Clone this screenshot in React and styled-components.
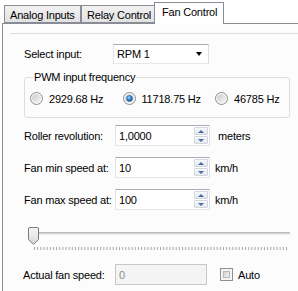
import React from "react";
import styled, { createGlobalStyle } from "styled-components";

const GlobalStyle = createGlobalStyle`
  html, body {
    margin: 0;
    padding: 0;
    background: #fff;
  }
  body {
    font-family: "Liberation Sans", Arial, sans-serif;
    font-size: 11px;
    letter-spacing: -0.2px;
    color: #000;
  }
`;

const Window = styled.div`
  width: 298px;
  height: 291px;
  overflow: hidden;
  background: #fff;
`;

const TabStrip = styled.div`
  display: flex;
  align-items: flex-end;
  height: 23px;
  padding-left: 4px;
  box-sizing: border-box;
`;

const Tab = styled.div`
  position: relative;
  box-sizing: border-box;
  width: ${p => p.$w}px;
  height: ${p => (p.$active ? 22 : 18)}px;
  margin-left: ${p => (p.$active ? -1 : 0)}px;
  margin-bottom: ${p => (p.$active ? -1 : 0)}px;
  padding: ${p => (p.$active ? "3px 0 0 7px" : "3px 0 0 5px")};
  border: 1px solid #898c95;
  border-bottom: ${p => (p.$active ? "none" : "1px solid #898c95")};
  background: ${p => (p.$active ? "#fff" : "linear-gradient(#f2f2f2, #e1e1e1)")};
  z-index: ${p => (p.$active ? 2 : 1)};
  line-height: 13px;
  white-space: nowrap;
`;

const Page = styled.div`
  margin-left: 2px;
  height: 268px;
  border-top: 1px solid #898c95;
  border-left: 1px solid #898c95;
  background: #fcfcfc;
`;

const Separator = styled.div`
  margin: 9px 0 0 7px;
  height: 1px;
  background: #dcdcdc;
`;

const Content = styled.div`
  display: flex;
  flex-direction: column;
  padding-left: 21px;
`;

const Row = styled.div`
  display: flex;
  align-items: center;
  height: ${p => p.$h || 21}px;
  margin-top: ${p => p.$top}px;
  margin-left: ${p => p.$left || 0}px;
`;

const Label = styled.span`
  flex: none;
  width: ${p => p.$w || 91}px;
  white-space: nowrap;
`;

const Unit = styled.span`
  margin-left: ${p => p.$gap}px;
`;

const Combo = styled.div`
  display: flex;
  align-items: center;
  justify-content: space-between;
  box-sizing: border-box;
  width: 96px;
  height: 20px;
  padding: 0 6px 0 3px;
  border: 1px solid;
  border-color: #abadb3 #dbdfe6 #e3e9ef #e2e3ea;
  background: #fff;
`;

const ComboArrow = styled.span`
  width: 0;
  height: 0;
  border-left: 3.5px solid transparent;
  border-right: 3.5px solid transparent;
  border-top: 4px solid #000;
`;

const GroupBox = styled.div`
  display: flex;
  flex-direction: column;
  box-sizing: border-box;
  width: 266px;
  height: 41px;
  margin-top: 13px;
  padding-left: 5px;
  border: 1px solid #d5dfe5;
  border-radius: 3px;
`;

const GroupTitle = styled.span`
  align-self: flex-start;
  margin: -7px 0 0 3px;
  padding: 0 1px;
  line-height: 13px;
  background: #fcfcfc;
`;

const RadioRow = styled.div`
  display: flex;
  align-items: center;
  margin-top: 8px;
  height: 13px;
`;

const RadioItem = styled.label`
  display: flex;
  align-items: center;
  gap: 6px;
  width: 92.5px;
  flex: none;
  white-space: nowrap;
`;

const NumberBox = styled.div`
  display: flex;
  align-items: stretch;
  box-sizing: border-box;
  width: ${p => p.$w || 95}px;
  height: 21px;
  padding: 1px;
  border: 1px solid;
  border-color: ${p => (p.$disabled ? "#c7c7c7" : "#abadb3 #dbdfe6 #e3e9ef #e2e3ea")};
  background: ${p => (p.$disabled ? "#f4f4f4" : "#fff")};
  color: ${p => (p.$disabled ? "#8d8d8d" : "#000")};
`;

const Value = styled.span`
  flex: 1;
  display: flex;
  align-items: center;
  padding-left: 2px;
`;

const SpinCol = styled.div`
  display: flex;
  flex-direction: column;
  gap: 1px;
  width: 14px;
`;

const SpinButton = styled.div`
  flex: 1;
  display: flex;
  align-items: center;
  justify-content: center;
  box-sizing: border-box;
  border: 1px solid #d3d8df;
  border-radius: 1px;
  background: linear-gradient(#f6f7f9, #e4e7eb);
`;

const SpinArrow = styled.span`
  width: 0;
  height: 0;
  border-left: 3px solid transparent;
  border-right: 3px solid transparent;
  ${p => (p.$down ? "border-top: 3px solid #4a6ca6;" : "border-bottom: 3px solid #4a6ca6;")}
`;

const SliderWrap = styled.div`
  position: relative;
  width: 262px;
  height: 24px;
  margin: 17px 0 0 4px;
`;

const Track = styled.div`
  margin-top: 5px;
  height: 1px;
  border-top: 1px solid #b9b9b9;
  border-bottom: 1px solid #ececec;
  background: #d6d6d6;
`;

const Thumb = styled.svg`
  position: absolute;
  left: 0;
  top: 0;
`;

const Ticks = styled.svg`
  display: block;
  margin-top: 12px;
`;

const CheckBox = styled.span`
  box-sizing: border-box;
  width: 13px;
  height: 13px;
  margin-left: 13px;
  border: 1px solid #8f8f8f;
  padding: 2px;
  background: #f4f4f4;
  &::after {
    content: "";
    display: block;
    width: 100%;
    height: 100%;
    box-sizing: border-box;
    border: 1px solid #b5b8bd;
    background: linear-gradient(135deg, #cdd0d4, #f3f3f3);
  }
`;

const CheckLabel = styled.span`
  margin-left: 5px;
`;

const Radio = ({ checked }) => (
  <svg width="13" height="13" viewBox="0 0 13 13">
    <defs>
      <linearGradient id="rg" x1="0" y1="0" x2="1" y2="1">
        <stop offset="0" stopColor="#c9c9c9" />
        <stop offset="1" stopColor="#f8f8f8" />
      </linearGradient>
      <radialGradient id="rb" cx="0.4" cy="0.35" r="0.7">
        <stop offset="0" stopColor="#a9d8ff" />
        <stop offset="0.5" stopColor="#3284d6" />
        <stop offset="1" stopColor="#1b4f8f" />
      </radialGradient>
    </defs>
    <circle cx="6.5" cy="6.5" r="6" fill="#f4f4f4" stroke="#8e8f8f" />
    <circle cx="6.5" cy="6.5" r="4.3" fill="url(#rg)" />
    {checked && <circle cx="6.5" cy="6.5" r="3" fill="url(#rb)" stroke="#2d5f94" strokeWidth="0.6" />}
  </svg>
);

const Spinner = () => (
  <SpinCol>
    <SpinButton><SpinArrow /></SpinButton>
    <SpinButton><SpinArrow $down /></SpinButton>
  </SpinCol>
);

const App = () => {
  const ticks = Array.from({ length: 81 }, (_, i) => 6.5 + i * 3.15);

  return (
    <Window>
      <GlobalStyle />
      <TabStrip>
        <Tab $w={77}>Analog Inputs</Tab>
        <Tab $w={74}>Relay Control</Tab>
        <Tab $w={70} $active>Fan Control</Tab>
      </TabStrip>
      <Page>
        <Separator />
        <Content>
          <Row $top={10} $h={20}>
            <Label $w={89}>Select input:</Label>
            <Combo>
              <span>RPM 1</span>
              <ComboArrow />
            </Combo>
          </Row>

          <GroupBox>
            <GroupTitle>PWM input frequency</GroupTitle>
            <RadioRow>
              <RadioItem><Radio />2929.68 Hz</RadioItem>
              <RadioItem><Radio checked />11718.75 Hz</RadioItem>
              <RadioItem><Radio />46785 Hz</RadioItem>
            </RadioRow>
          </GroupBox>

          <Row $top={7}>
            <Label>Roller revolution:</Label>
            <NumberBox>
              <Value>1,0000</Value>
              <Spinner />
            </NumberBox>
            <Unit $gap={8}>meters</Unit>
          </Row>

          <Row $top={11}>
            <Label>Fan min speed at:</Label>
            <NumberBox>
              <Value>10</Value>
              <Spinner />
            </NumberBox>
            <Unit $gap={5}>km/h</Unit>
          </Row>

          <Row $top={11}>
            <Label>Fan max speed at:</Label>
            <NumberBox>
              <Value>100</Value>
              <Spinner />
            </NumberBox>
            <Unit $gap={5}>km/h</Unit>
          </Row>

          <SliderWrap>
            <Track />
            <Thumb width="11" height="18" viewBox="0 0 11 18">
              <defs>
                <linearGradient id="tg" x1="0" y1="0" x2="0" y2="1">
                  <stop offset="0" stopColor="#f4f4f4" />
                  <stop offset="0.5" stopColor="#ebebeb" />
                  <stop offset="1" stopColor="#d3d3d3" />
                </linearGradient>
              </defs>
              <path
                d="M0.5 2 Q0.5 0.5 2 0.5 H9 Q10.5 0.5 10.5 2 V12.5 L5.5 17.3 L0.5 12.5 Z"
                fill="url(#tg)"
                stroke="#7b7b7b"
              />
            </Thumb>
            <Ticks width="262" height="4">
              {ticks.map((x, i) => (
                <line key={i} x1={x} y1="0" x2={x} y2="3" stroke="#a5a5a5" strokeWidth="1" />
              ))}
            </Ticks>
          </SliderWrap>

          <Row $top={13} $left={-1}>
            <Label $w={92}>Actual fan speed:</Label>
            <NumberBox $w={92} $disabled>
              <Value>0</Value>
            </NumberBox>
            <CheckBox />
            <CheckLabel>Auto</CheckLabel>
          </Row>
        </Content>
      </Page>
    </Window>
  );
};

export default App;
